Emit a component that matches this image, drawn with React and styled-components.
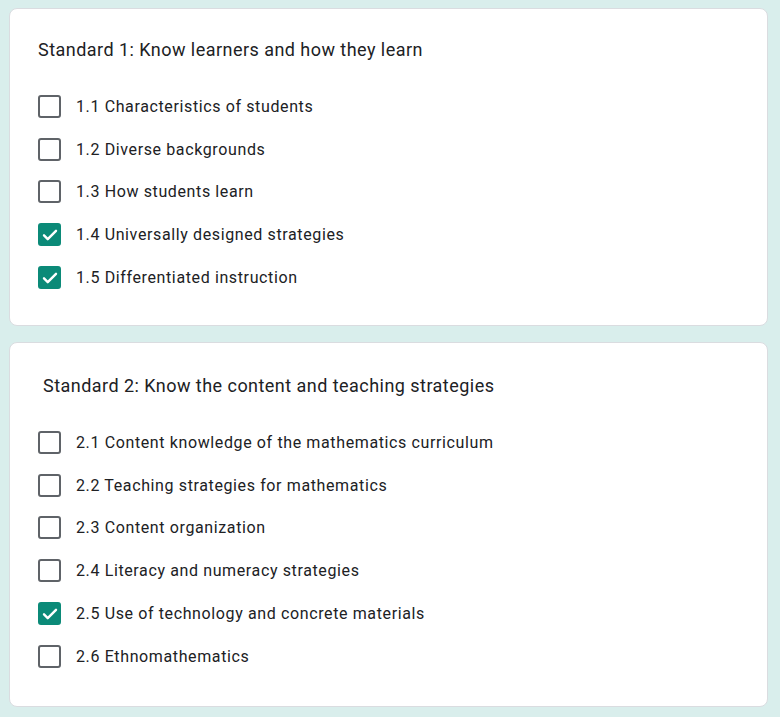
import React from "react";
import styled, { createGlobalStyle } from "styled-components";

const GlobalStyle = createGlobalStyle`
  * { box-sizing: border-box; }
  body {
    margin: 0;
    background: #d9eeec;
    font-family: Roboto, "Liberation Sans", Arial, sans-serif;
    color: #202124;
  }
`;

const Page = styled.div`
  padding: 8px 12px 12px 9px;
  display: flex;
  flex-direction: column;
  gap: 16px;
`;

const Card = styled.section`
  background: #fff;
  border: 1px solid #dadce0;
  border-radius: 8px;
  padding: ${(p) => (p.$shift ? "30px 24px 28px 33px" : "28px 24px 26px 28px")};
`;

const Title = styled.h2`
  margin: 0 0 22px;
  font-size: 18px;
  font-weight: 400;
  line-height: 26px;
  letter-spacing: 0.46px;
`;

const List = styled.div`
  display: flex;
  flex-direction: column;
  margin-left: ${(p) => (p.$shift ? "-5px" : "0")};
`;

const Row = styled.label`
  display: flex;
  align-items: center;
  gap: 15px;
  height: 42.8px;
  font-size: 16px;
  letter-spacing: 0.62px;
`;

const Box = styled.span`
  width: 23px;
  height: 23px;
  flex: none;
  border-radius: 3px;
  border: 2px solid ${(p) => (p.$on ? "#0b8a78" : "#5f6368")};
  background: ${(p) => (p.$on ? "#0b8a78" : "#fff")};
  display: flex;
  align-items: center;
  justify-content: center;
`;

const Check = () => (
  <svg width="18" height="18" viewBox="0 0 24 24" fill="none">
    <path d="M4 12.5l5 5L20 6.5" stroke="#fff" strokeWidth="3.2" strokeLinecap="round" strokeLinejoin="round" />
  </svg>
);

const sections = [
  {
    title: "Standard 1: Know learners and how they learn",
    items: [
      ["1.1 Characteristics of students", false],
      ["1.2 Diverse backgrounds", false],
      ["1.3 How students learn", false],
      ["1.4 Universally designed strategies", true],
      ["1.5 Differentiated instruction", true],
    ],
  },
  {
    title: "Standard 2: Know the content and teaching strategies",
    shift: true,
    items: [
      ["2.1 Content knowledge of the mathematics curriculum", false],
      ["2.2 Teaching strategies for mathematics", false],
      ["2.3 Content organization", false],
      ["2.4 Literacy and numeracy strategies", false],
      ["2.5 Use of technology and concrete materials", true],
      ["2.6 Ethnomathematics", false],
    ],
  },
];

export default function App() {
  return (
    <>
      <GlobalStyle />
      <Page>
        {sections.map((s) => (
          <Card key={s.title} $shift={s.shift}>
            <Title>{s.title}</Title>
            <List $shift={s.shift}>
              {s.items.map(([label, on]) => (
                <Row key={label}>
                  <Box $on={on}>{on && <Check />}</Box>
                  {label}
                </Row>
              ))}
            </List>
          </Card>
        ))}
      </Page>
    </>
  );
}
